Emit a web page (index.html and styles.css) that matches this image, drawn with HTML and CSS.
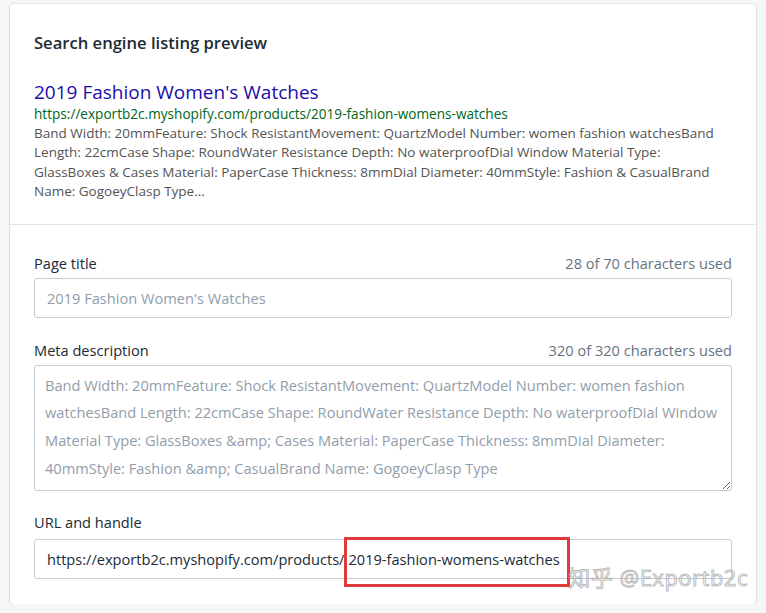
FILE: index.html
```html
<!DOCTYPE html>
<html lang="en">
<head>
<meta charset="utf-8">
<title>Search engine listing preview</title>
<link rel="stylesheet" href="styles.css">
</head>
<body>
<div class="card">
  <section class="preview">
    <h2 class="heading">Search engine listing preview</h2>
    <div class="serp">
      <div class="serp-title">2019 Fashion Women's Watches</div>
      <div class="serp-url">https://exportb2c.myshopify.com/products/2019-fashion-womens-watches</div>
      <div class="serp-desc">Band Width: 20mmFeature: Shock ResistantMovement: QuartzModel Number: women fashion watchesBand Length: 22cmCase Shape: RoundWater Resistance Depth: No waterproofDial Window Material Type: GlassBoxes &amp; Cases Material: PaperCase Thickness: 8mmDial Diameter: 40mmStyle: Fashion &amp; CasualBrand Name: GogoeyClasp Type...</div>
    </div>
  </section>
  <section class="fields">
    <div class="field">
      <div class="label-row"><label class="label">Page title</label><span class="count">28 of 70 characters used</span></div>
      <input class="input" type="text" placeholder="2019 Fashion Women's Watches">
    </div>
    <div class="field">
      <div class="label-row"><label class="label">Meta description</label><span class="count">320 of 320 characters used</span></div>
      <textarea class="textarea" placeholder="Band Width: 20mmFeature: Shock ResistantMovement: QuartzModel Number: women fashion watchesBand Length: 22cmCase Shape: RoundWater Resistance Depth: No waterproofDial Window Material Type: GlassBoxes &amp;amp; Cases Material: PaperCase Thickness: 8mmDial Diameter: 40mmStyle: Fashion &amp;amp; CasualBrand Name: GogoeyClasp Type"></textarea>
    </div>
    <div class="field last">
      <div class="label-row single"><label class="label">URL and handle</label></div>
      <div class="input url">https://exportb2c.myshopify.com/products/<span class="handle">2019-fashion-womens-watches</span></div>
    </div>
  </section>
  <div class="watermark">知乎 @Exportb2c</div>
</div>
</body>
</html>
```
FILE: styles.css
```css
html, body {
  margin: 0;
  background: #f4f6f8;
}
body {
  padding: 4px 10px 0 10px;
  font-family: "Open Sans", "Noto Sans", "Noto Sans CJK SC", sans-serif;
  color: #212b36;
}
.card {
  position: relative;
  background: #fff;
  border-radius: 4px;
  box-shadow: 0 0 0 1px rgba(63,63,68,0.06), 0 1px 3px rgba(63,63,68,0.15);
  height: 600px;
  box-sizing: border-box;
}
.preview {
  padding: 27px 24px 22px 24px;
  border-bottom: 1px solid #e3e6e9;
}
.heading {
  margin: 0;
  font-size: 16.6px;
  font-weight: 600;
  line-height: 24px;
}
.serp {
  margin-top: 25px;
}
.serp-title {
  font-size: 19px;
  line-height: 24px;
  color: #1a0dab;
}
.serp-url {
  font-size: 13.6px;
  line-height: 20px;
  color: #006621;
}
.serp-desc {
  font-size: 13.5px;
  line-height: 19.4px;
  color: #545454;
}
.fields {
  padding: 28px 24px 24px 24px;
  display: flex;
  flex-direction: column;
  gap: 22px;
}
.field.last {
  margin-top: -1px;
}
.label-row {
  display: flex;
  justify-content: space-between;
  align-items: center;
  line-height: 20px;
  margin-bottom: 5px;
}
.label-row.single {
  margin-bottom: 7px;
}
.label {
  font-size: 14.6px;
  color: #212b36;
}
.count {
  font-size: 14.6px;
  color: #68737f;
}
.input, .textarea {
  display: block;
  width: 100%;
  box-sizing: border-box;
  border: 1px solid #c4cdd5;
  border-radius: 3px;
  font-family: inherit;
  font-size: 14.6px;
  color: #212b36;
  background: #fff;
  outline: none;
}
.input {
  height: 40px;
  padding: 0 12px;
  line-height: 38px;
}
.input::placeholder, .textarea::placeholder {
  color: #919eab;
  opacity: 1;
}
.textarea {
  height: 126px;
  padding: 6px 10px;
  line-height: 27.7px;
  resize: vertical;
}
.url {
  white-space: nowrap;
}
.handle {
  position: relative;
  margin-left: 4px;
}
.handle::after {
  content: "";
  position: absolute;
  left: -4px;
  right: -10px;
  top: -12px;
  bottom: -18px;
  border: 3px solid #e03a3a;
}
.watermark {
  position: absolute;
  right: 8px;
  bottom: 14px;
  font-size: 22px;
  line-height: 26px;
  color: rgba(255,255,255,0.6);
  -webkit-text-stroke: 1px rgba(130,130,130,0.55);
  letter-spacing: 0.5px;
}
```
